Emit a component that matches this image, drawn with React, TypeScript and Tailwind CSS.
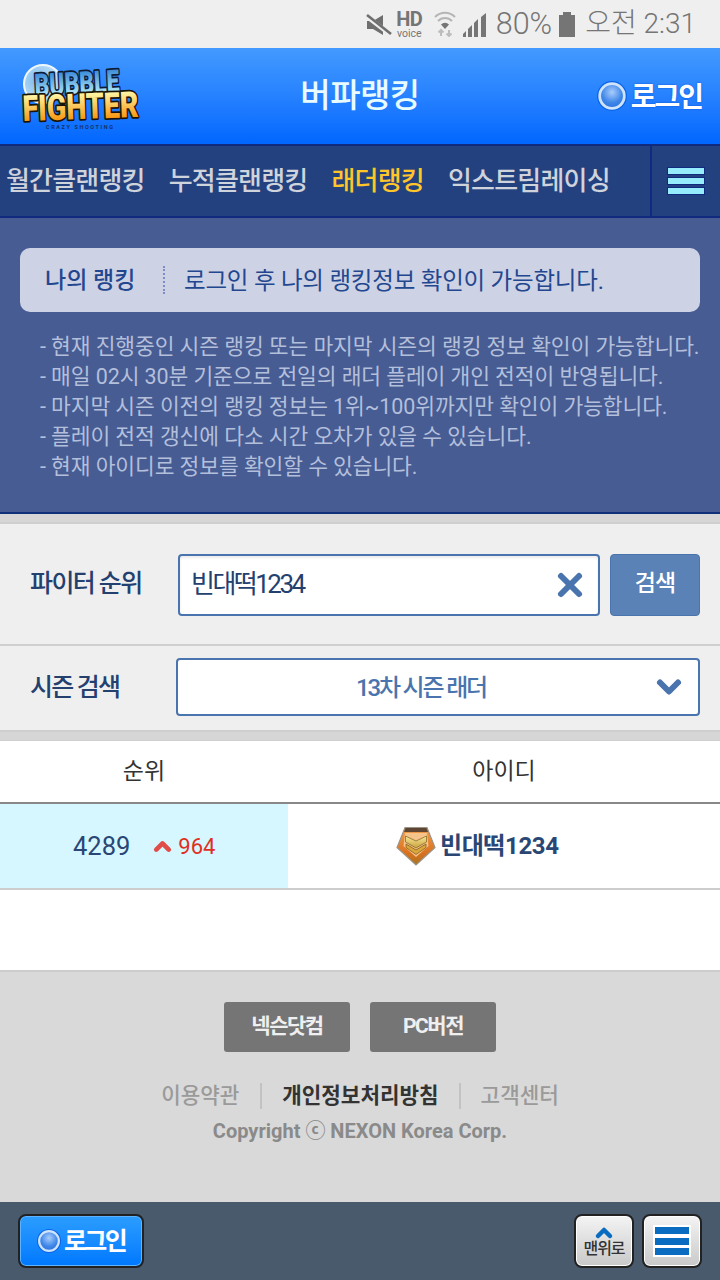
import { X, ChevronDown, ChevronUp } from "lucide-react";

const font = "font-['Roboto','Noto_Sans_CJK_KR',sans-serif]";

const notices = [
  "- 현재 진행중인 시즌 랭킹 또는 마지막 시즌의 랭킹 정보 확인이 가능합니다.",
  "- 매일 02시 30분 기준으로 전일의 래더 플레이 개인 전적이 반영됩니다.",
  "- 마지막 시즌 이전의 랭킹 정보는 1위~100위까지만 확인이 가능합니다.",
  "- 플레이 전적 갱신에 다소 시간 오차가 있을 수 있습니다.",
  "- 현재 아이디로 정보를 확인할 수 있습니다.",
];

function StatusBar() {
  return (
    <div className="h-12 bg-[#efefef] flex items-center justify-end pr-[24px] text-[#757575] shrink-0">
      {/* muted speaker */}
      <svg width="26" height="22" viewBox="0 0 26 22" className="mr-[3px] mt-[2px]">
        <path d="M1 7h6l10-6v20L7 15H1z" fill="#6f6f6f" />
        <path d="M0 2l25 19" stroke="#efefef" strokeWidth="4.500" />
        <path d="M1 1l24 19" stroke="#6f6f6f" strokeWidth="2.600" />
      </svg>
      <div className="flex flex-col items-center w-[29px] mr-[10px] mt-[1px] leading-none">
        <span className="text-[20px] font-bold h-[15px] leading-[15px] tracking-[-0.5px]">HD</span>
        <span className="text-[10.500px] h-[11px] leading-[13px]">voice</span>
      </div>
      {/* wifi */}
      <svg width="22" height="26" viewBox="0 0 22 26" className="mr-[7px]">
        <path d="M1 6a14 14 0 0 1 20 0M4 10a9.500 9.500 0 0 1 14 0" fill="none" stroke="#b5b5b5" strokeWidth="2" />
        <path d="M7 13.500a5.500 5.500 0 0 1 8 0L11 18z" fill="#757575" />
        <path d="M7 19v6M4.500 21.500L7 19l2.500 2.500" fill="none" stroke="#bdbdbd" strokeWidth="2" />
        <path d="M15 25v-6M12.500 22.500L15 25l2.500-2.500" fill="none" stroke="#bdbdbd" strokeWidth="2" />
      </svg>
      {/* signal */}
      <svg width="24" height="24" viewBox="0 0 24 24" className="mr-[9px] mt-[1px]">
        <path d="M0 24v-3l3-3v6zM5 24v-8l4-4v12zM11 24V10l4-4v18zM18 24V4l5-4v24z" fill="#757575" />
      </svg>
      <span className="text-[30.500px] font-['Roboto',sans-serif] font-light leading-none mr-[7px]">80%</span>
      <div className="w-[16px] h-[25px] mr-[10px] flex flex-col items-center">
        <div className="w-[8px] h-[3px] bg-[#757575]" />
        <div className="w-[16px] h-[22px] bg-[#757575]" />
      </div>
      <span className={`text-[28px] font-light leading-none ${font}`}>오전 2:31</span>
    </div>
  );
}

function Orb({ size }: { size: number }) {
  return (
    <svg width={size} height={size} viewBox="0 0 28 28">
      <defs>
        <radialGradient id={`orb${size}`} cx="0.5" cy="0.35" r="0.7">
          <stop offset="0" stopColor="#a9cdfb" />
          <stop offset="0.6" stopColor="#3f86e8" />
          <stop offset="1" stopColor="#2a6fdc" />
        </radialGradient>
      </defs>
      <circle cx="14" cy="14" r="14" fill="#0a64e8" />
      <circle cx="14" cy="14" r="11.500" fill={`url(#orb${size})`} stroke="#cfe4fb" strokeWidth="2.600" />
    </svg>
  );
}

function Logo() {
  return (
    <svg width="120" height="68" viewBox="0 0 120 68" className="block overflow-visible font-['Roboto',sans-serif]">
      <defs>
        <linearGradient id="bubbleFill" x1="0" y1="0" x2="0" y2="1">
          <stop offset="0.1" stopColor="#2d7fd6" />
          <stop offset="0.75" stopColor="#a8e2f6" />
        </linearGradient>
        <linearGradient id="fighterFill" x1="0" y1="0" x2="0" y2="1">
          <stop offset="0.2" stopColor="#fff2a0" />
          <stop offset="0.8" stopColor="#f8950f" />
        </linearGradient>
        <radialGradient id="bubbleBall" cx="0.35" cy="0.4" r="0.7">
          <stop offset="0" stopColor="#7dbbee" />
          <stop offset="1" stopColor="#cfe8f8" />
        </radialGradient>
      </defs>
      <circle cx="22" cy="21" r="19" fill="url(#bubbleBall)" stroke="#eef7fd" strokeWidth="2" />
      <text
        x="14"
        y="33"
        fontSize="31"
        fontWeight="900"
        textLength="85"
        lengthAdjust="spacingAndGlyphs"
        fill="url(#bubbleFill)"
        stroke="#0e1c33"
        strokeWidth="3.500"
        strokeLinejoin="round"
        paintOrder="stroke"
        transform="rotate(-3 14 33)"
      >
        BUBBLE
      </text>
      <text
        x="2"
        y="58"
        fontSize="36"
        fontWeight="900"
        textLength="116"
        lengthAdjust="spacingAndGlyphs"
        fill="url(#fighterFill)"
        stroke="#1a1408"
        strokeWidth="3.500"
        strokeLinejoin="round"
        paintOrder="stroke"
        transform="rotate(-2 2 58)"
      >
        FIGHTER
      </text>
      <text x="25" y="66" fontSize="5.500" fontWeight="700" textLength="67" fill="#12306a">
        CRAZY SHOOTING
      </text>
    </svg>
  );
}

function Header() {
  return (
    <div className="h-24 bg-gradient-to-b from-[#439aff] to-[#0066ff] flex items-center justify-between shrink-0 relative">
      <div className="ml-[21px] mt-[2px]">
        <Logo />
      </div>
      <span className={`absolute left-0 right-0 text-center text-[33px] font-medium text-[#e8fbff] tracking-[-0.5px] ${font}`}>버파랭킹</span>
      <div className="flex items-center mr-[18px] gap-[4px]">
        <Orb size={30} />
        <span className={`text-[28px] mt-[4px] font-bold text-white tracking-[-2px] leading-none [text-shadow:0_0_2px_#0a4fd0] ${font}`}>로그인</span>
      </div>
    </div>
  );
}

function Nav() {
  return (
    <div className="h-[74px] bg-[#24417f] border-y-2 border-[#102a80] flex shrink-0">
      <div className="flex-1 flex items-center pl-[6px] gap-[24px] text-[26px] font-medium text-[#cfd3dc] tracking-[-0.8px] leading-none">
        <span className={font}>월간클랜랭킹</span>
        <span className={font}>누적클랜랭킹</span>
        <span className={`${font} text-[#ffc62a]`}>래더랭킹</span>
        <span className={font}>익스트림레이싱</span>
      </div>
      <div className="w-[70px] border-l-2 border-[#102a80] flex flex-col items-center justify-center gap-[2px]">
        <div className="w-[38px] h-[8px] bg-[#97ecfb] border border-[#102a80]" />
        <div className="w-[38px] h-[8px] bg-[#97ecfb] border border-[#102a80]" />
        <div className="w-[38px] h-[8px] bg-[#97ecfb] border border-[#102a80]" />
      </div>
    </div>
  );
}

function MyRanking() {
  return (
    <div className="h-[296px] bg-[#465c93] border-b-2 border-[#10307a] pt-[30px] shrink-0">
      <div className="mx-[20px] h-[64px] rounded-[10px] bg-[#cdd2e5] flex items-center">
        <span className={`ml-[25px] w-[90px] pt-[3px] text-[23px] font-medium text-[#23478f] whitespace-nowrap ${font}`}>나의 랭킹</span>
        <div className="ml-[28px] h-[28px] border-l-2 border-dotted border-[#7d8cc4]" />
        <span className={`ml-[19px] pt-[3px] text-[23.500px] text-[#23478f] tracking-[-0.2px] ${font}`}>로그인 후 나의 랭킹정보 확인이 가능합니다.</span>
      </div>
      <div className="mt-[20px] ml-[40px] flex flex-col">
        {notices.map((line) => (
          <p key={line} className={`h-[30px] leading-[30px] text-[21.500px] text-[#b4bfdb] whitespace-nowrap tracking-[-0.1px] ${font}`}>
            {line}
          </p>
        ))}
      </div>
    </div>
  );
}

function SearchArea() {
  return (
    <div className="shrink-0">
      <div className="h-[8px] bg-[#d6d6d6]" />
      <div className="h-[124px] bg-[#efefef] border-y-2 border-[#cfcfcf] flex items-center">
        <span className={`ml-[30px] w-[148px] text-[25px] font-medium text-[#23406f] tracking-[-1.6px] ${font}`}>파이터 순위</span>
        <div className="mt-[1px] w-[422px] h-[62px] bg-white border-2 border-[#4a74ad] rounded-[4px] flex items-center justify-between pl-[11px] pr-[10px] shadow-[inset_0_2px_3px_rgba(0,0,0,0.08)]">
          <span className={`text-[26px] text-[#23406f] tracking-[-2.500px] ${font}`}>빈대떡1234</span>
          <X size={36} strokeWidth={4} className="text-[#4a74ad]" />
        </div>
        <div className={`mt-[1px] ml-[10px] w-[90px] h-[62px] bg-[#5a82b6] border border-[#4a74ad] rounded-[4px] flex items-center justify-center text-[23px] font-medium text-white tracking-[-1px] ${font}`}>
          검색
        </div>
      </div>
      <div className="h-[84px] bg-[#efefef] flex items-center">
        <span className={`ml-[30px] w-[146px] text-[25px] font-medium text-[#23406f] tracking-[-1.8px] ${font}`}>시즌 검색</span>
        <div className="mb-[2px] w-[524px] h-[58px] bg-white border-2 border-[#4a74ad] rounded-[4px] flex items-center relative">
          <span className={`flex-1 text-center pr-[34px] pt-[2px] text-[24px] font-medium text-[#4a74ad] tracking-[-2.200px] ${font}`}>13차 시즌 래더</span>
          <ChevronDown size={36} strokeWidth={4} className="absolute right-[11px] text-[#4a74ad]" />
        </div>
      </div>
      <div className="h-[11px] bg-[#d6d6d6] border-t-2 border-b border-[#cfcfcf]" />
    </div>
  );
}

function Badge() {
  return (
    <svg width="40" height="40" viewBox="0 0 40 40">
      <defs>
        <linearGradient id="badgeFill" x1="0" y1="0" x2="0" y2="1">
          <stop offset="0" stopColor="#f2a04e" />
          <stop offset="0.7" stopColor="#d8701e" />
          <stop offset="1" stopColor="#a8741e" />
        </linearGradient>
        <linearGradient id="chevFill" x1="0" y1="0" x2="0" y2="1">
          <stop offset="0" stopColor="#f7e79a" />
          <stop offset="1" stopColor="#c9a23c" />
        </linearGradient>
      </defs>
      <path d="M9 1.500h22l8 20L20 39 1 21.500z" fill="url(#badgeFill)" stroke="#9a9488" strokeWidth="1.200" />
      <path d="M9.500 2h21l1.500 4H8z" fill="#5e4632" />
      <path d="M9 7h22l1.500 13L20 31 7.500 20z" fill="#f6c48a" />
      <path d="M9.500 10l10.500 5 10.500-5v6l-10.500 6-10.500-6z" fill="url(#chevFill)" stroke="#8a6a24" strokeWidth="0.800" />
      <path d="M10 18l10 6 10-6v3.500l-10 7-10-7z" fill="#d8a83a" stroke="#8a5a20" strokeWidth="0.800" />
    </svg>
  );
}

function RankTable() {
  return (
    <div className="shrink-0">
      <div className="h-[63px] bg-white flex items-center border-b-2 border-[#888888] pt-[2px]">
        <span className={`w-[288px] text-center text-[23px] text-[#333333] ${font}`}>순위</span>
        <span className={`flex-1 text-center text-[23px] text-[#333333] ${font}`}>아이디</span>
      </div>
      <div className="h-[86px] flex border-b-2 border-[#cccccc]">
        <div className="w-[288px] bg-[#d6f7ff] flex items-center pl-[73px]">
          <span className={`text-[25.500px] text-[#2a4674] ${font}`}>4289</span>
          <ChevronUp size={25} strokeWidth={4.500} className="ml-[20px] text-[#e04c48]" />
          <span className={`ml-[3px] text-[22px] text-[#e0301e] ${font}`}>964</span>
        </div>
        <div className="flex-1 bg-white flex items-center pl-[108px] gap-[4px]">
          <Badge />
          <span className={`text-[24px] font-bold text-[#2a4674] tracking-[-0.4px] ${font}`}>빈대떡1234</span>
        </div>
      </div>
      <div className="h-[82px] bg-white border-b-2 border-[#cccccc]" />
    </div>
  );
}

function Footer() {
  return (
    <div className="flex-1 bg-[#d9d9d9] flex flex-col items-center pt-[30px]">
      <div className="flex gap-[20px]">
        <div className={`w-[126px] h-[50px] rounded-[3px] bg-[#757575] flex items-center justify-center text-[21px] font-bold text-[#efefef] tracking-[-1.5px] ${font}`}>넥슨닷컴</div>
        <div className={`w-[126px] h-[50px] rounded-[3px] bg-[#757575] flex items-center justify-center text-[21px] font-bold text-[#efefef] tracking-[-1.5px] ${font}`}>PC버전</div>
      </div>
      <div className={`mt-[30px] h-[28px] flex items-center text-[21.250px] font-medium ${font}`}>
        <span className="text-[#9a9a9a] w-[99px]">이용약관</span>
        <div className="h-[26px] border-l-2 border-[#c2c2c2]" />
        <span className="text-[#333333] font-bold px-[20px]">개인정보처리방침</span>
        <div className="h-[26px] border-l-2 border-[#c2c2c2]" />
        <span className="text-[#9a9a9a] pl-[20px]">고객센터</span>
      </div>
      <div className={`mt-[6px] text-[20px] font-bold text-[#8a8a8a] ${font}`}>Copyright ⓒ NEXON Korea Corp.</div>
    </div>
  );
}

function BottomBar() {
  return (
    <div className="h-[78px] bg-[#4a5a6d] flex items-center justify-between pl-[18px] pr-[18px] shrink-0">
      <div className="w-[126px] h-[54px] rounded-[8px] border-2 border-[#222222] bg-gradient-to-b from-[#2b9dff] to-[#0078ff] shadow-[inset_0_0_0_1px_#5fb4ff] flex items-center justify-center gap-[3px]">
        <Orb size={24} />
        <span className={`text-[25px] mt-[1px] font-bold text-white tracking-[-2.600px] leading-none ${font}`}>로그인</span>
      </div>
      <div className="flex gap-[8px]">
        <div className="w-[60px] h-[54px] rounded-[8px] border-2 border-[#222222] bg-gradient-to-b from-[#f4f4f4] to-[#c9c9c9] shadow-[inset_0_0_0_1px_#ffffff] flex flex-col items-center justify-center">
          <ChevronUp size={24} strokeWidth={4.500} className="text-[#0a6cc0] -mb-[6px] -mt-[2px]" />
          <span className={`text-[16px] text-[#333333] font-medium tracking-[-1px] leading-[20px] ${font}`}>맨위로</span>
        </div>
        <div className="w-[60px] h-[54px] rounded-[8px] border-2 border-[#222222] bg-gradient-to-b from-[#f4f4f4] to-[#c9c9c9] shadow-[inset_0_0_0_1px_#ffffff] flex items-center justify-center">
          <div className="w-[38px] h-[32px] bg-white p-[2px] flex flex-col justify-between">
            <div className="h-[7px] bg-[#0a6cc0]" />
            <div className="h-[7px] bg-[#0a6cc0]" />
            <div className="h-[7px] bg-[#0a6cc0]" />
          </div>
        </div>
      </div>
    </div>
  );
}

export default function App() {
  return (
    <div className={`w-[720px] h-[1280px] flex flex-col overflow-hidden ${font}`}>
      <StatusBar />
      <Header />
      <Nav />
      <MyRanking />
      <SearchArea />
      <RankTable />
      <Footer />
      <BottomBar />
    </div>
  );
}
